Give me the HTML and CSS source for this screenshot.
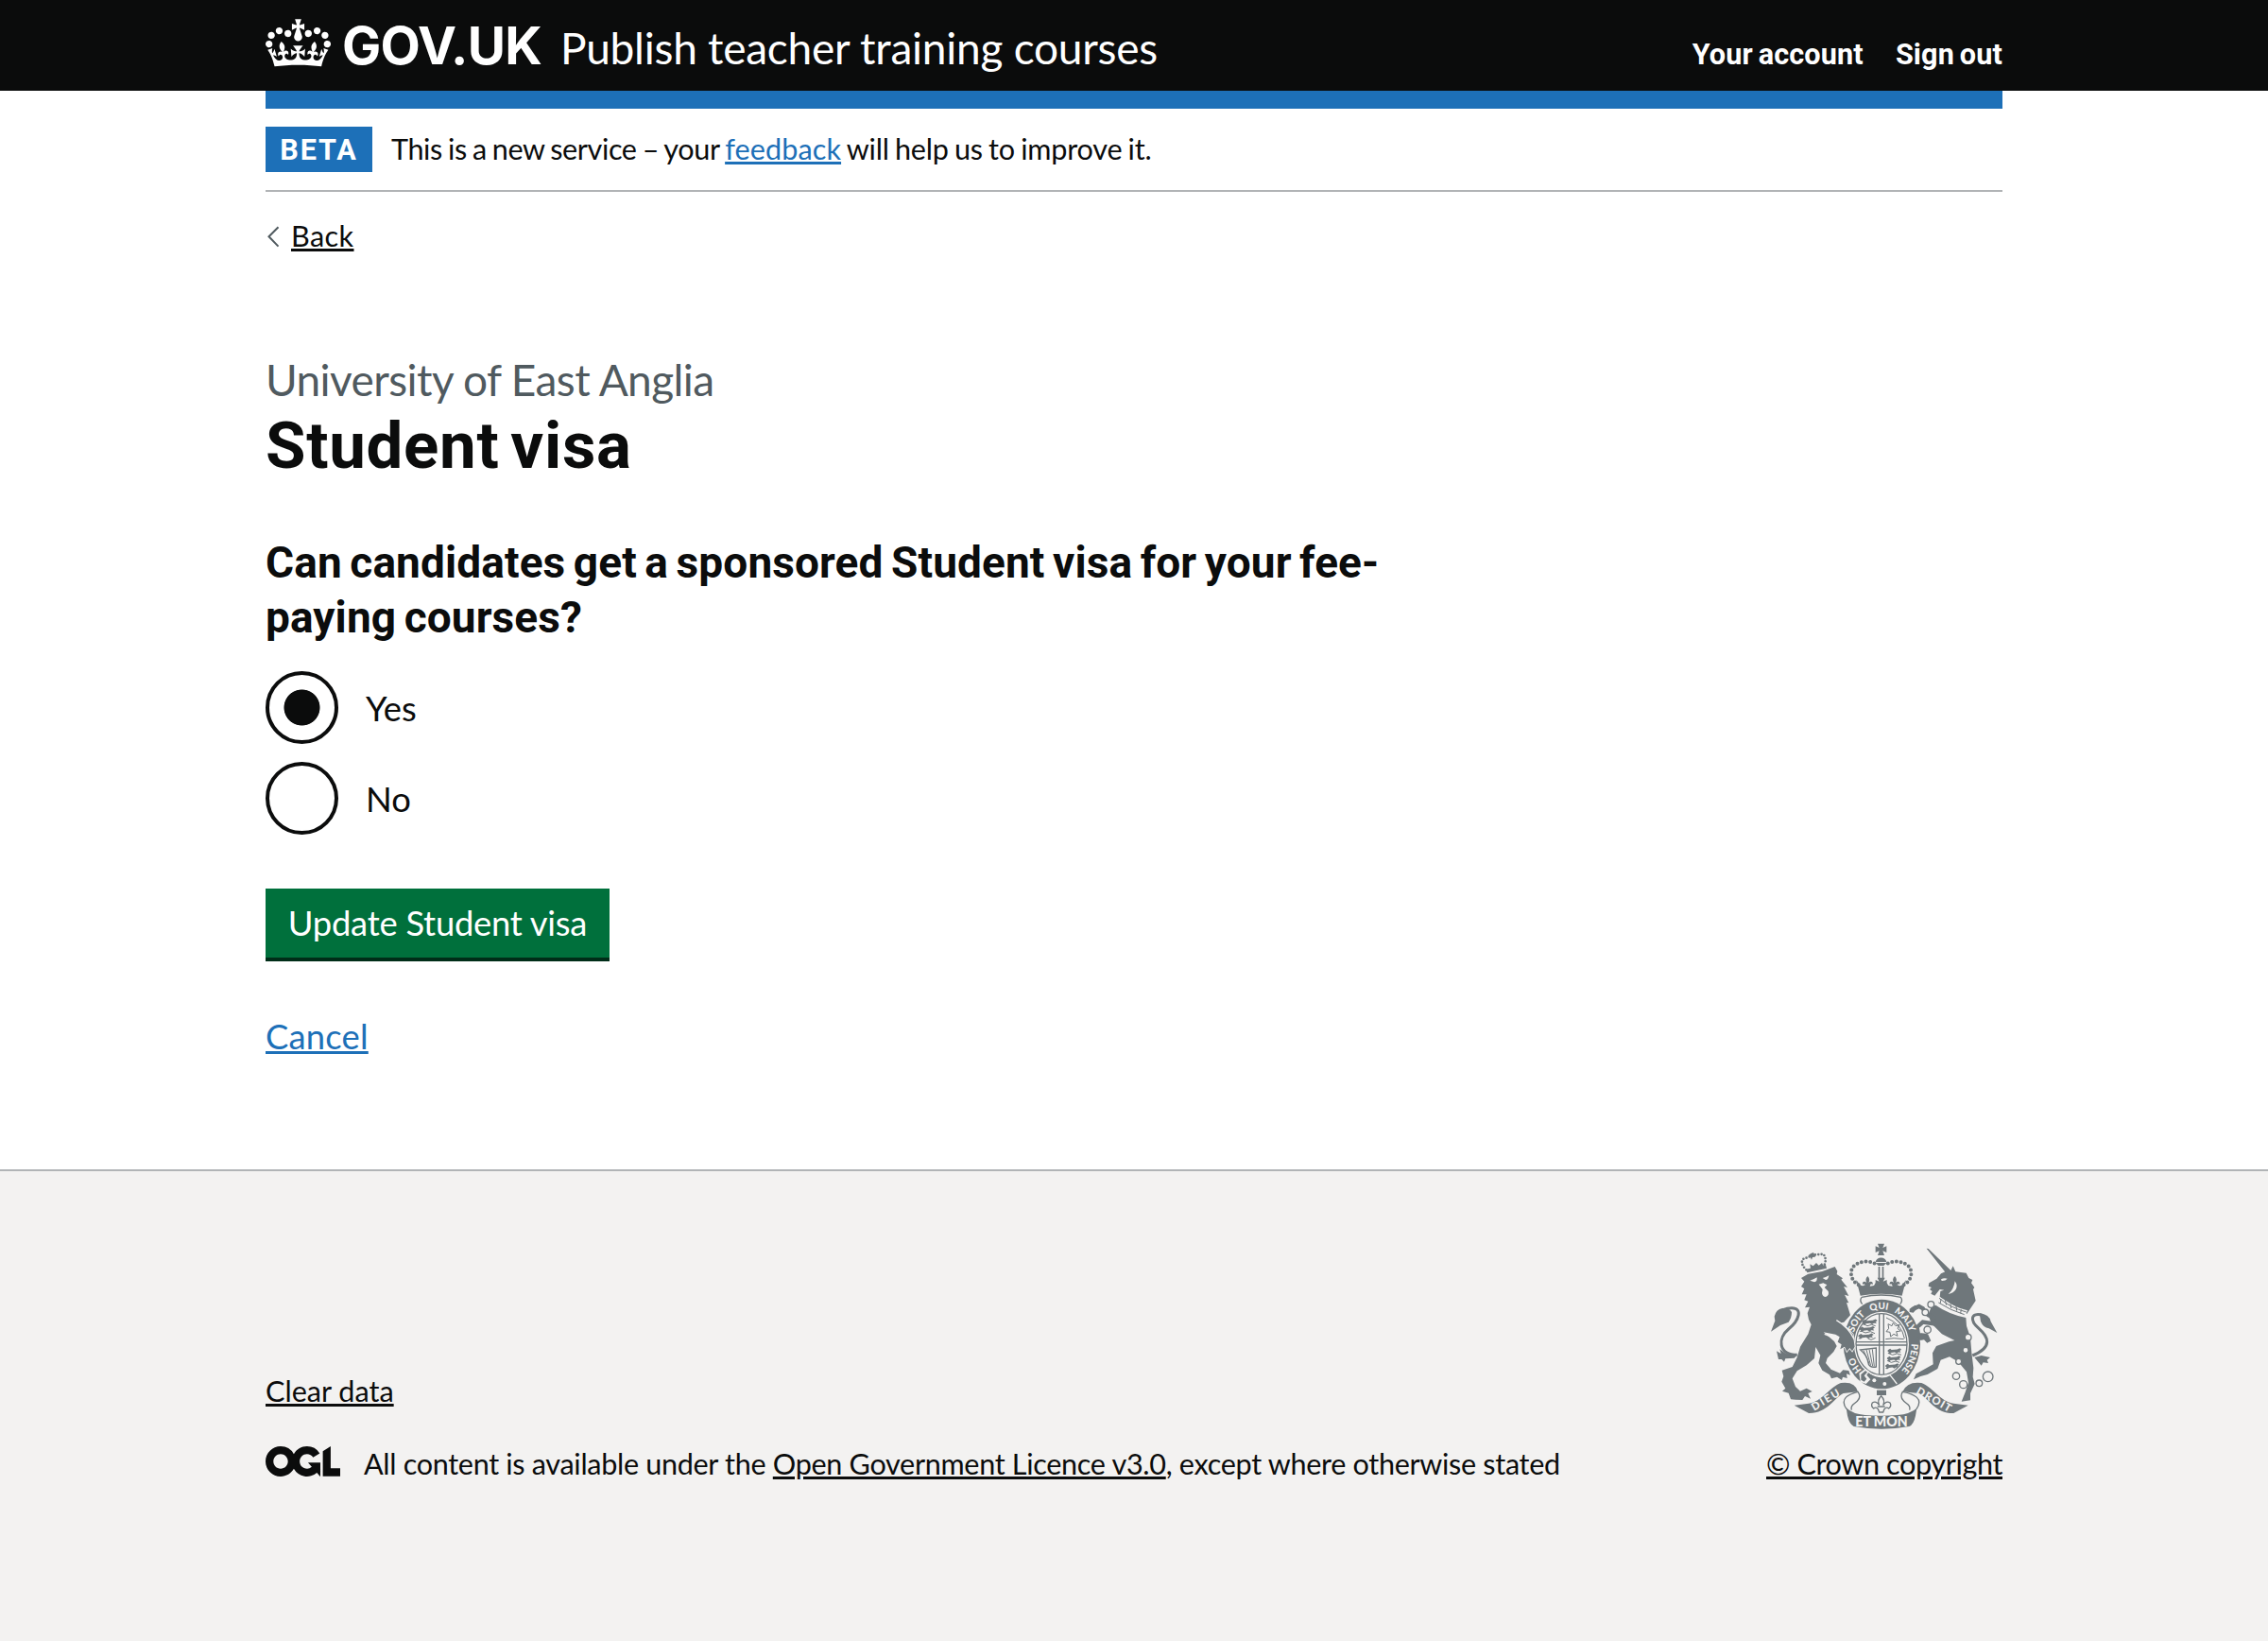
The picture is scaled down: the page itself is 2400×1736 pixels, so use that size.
FILE: index.html
```html
<!DOCTYPE html>
<html lang="en">
<head>
<meta charset="utf-8">
<title>Student visa – Publish teacher training courses – GOV.UK</title>
<link rel="stylesheet" href="styles.css">
</head>
<body>
<header class="header">
  <div class="container header-row">
    <a class="logo" href="#">
      <svg class="crown" viewBox="0 0 132 97" aria-hidden="true"><path fill="currentColor" fill-rule="evenodd" d="M25 30.2c3.5 1.5 7.7-.2 9.1-3.7 1.5-3.6-.2-7.8-3.9-9.2-3.6-1.4-7.6.3-9.1 3.9-1.4 3.5.3 7.5 3.9 9zM9 39.5c3.6 1.5 7.8-.2 9.2-3.7 1.5-3.6-.2-7.8-3.9-9.1-3.6-1.5-7.6.2-9.1 3.8-1.4 3.5.3 7.5 3.8 9zM4.4 57.2c3.5 1.5 7.7-.2 9.1-3.8 1.5-3.6-.2-7.7-3.9-9.1-3.5-1.5-7.6.3-9.1 3.8-1.4 3.5.3 7.6 3.9 9.1zm38.3-21.4c3.5 1.5 7.7-.2 9.1-3.8 1.5-3.6-.2-7.7-3.9-9.1-3.6-1.5-7.6.3-9.1 3.8-1.3 3.6.4 7.7 3.9 9.1zm64.4-5.6c-3.6 1.5-7.8-.2-9.1-3.7-1.5-3.6.2-7.8 3.8-9.2 3.6-1.4 7.7.3 9.2 3.9 1.3 3.5-.4 7.5-3.9 9zm15.9 9.3c-3.6 1.5-7.7-.2-9.1-3.7-1.5-3.6.2-7.8 3.7-9.1 3.6-1.5 7.7.2 9.2 3.8 1.5 3.5-.3 7.5-3.8 9zm4.7 17.7c-3.6 1.5-7.8-.2-9.2-3.8-1.5-3.6.2-7.7 3.9-9.1 3.6-1.5 7.7.3 9.2 3.8 1.3 3.5-.4 7.6-3.9 9.1zM89.3 35.8c-3.6 1.5-7.8-.2-9.2-3.8-1.4-3.6.2-7.7 3.9-9.1 3.6-1.5 7.7.3 9.2 3.8 1.4 3.6-.3 7.7-3.9 9.1zM69.7 17.7l8.9 4.7V9.3l-8.9 2.8c-.2-.3-.5-.6-.9-.9L72.4 0H59.6l3.5 11.2c-.3.3-.6.5-.9.9l-8.8-2.8v13.1l8.8-4.7c.3.3.6.7.9.9l-5 15.4v.1c-.2.8-.4 1.6-.4 2.4 0 4.1 3.1 7.5 7 8.1h.2c.3 0 .7.1 1 .1.4 0 .7 0 1-.1h.2c4-.6 7.1-4.1 7.1-8.1 0-.8-.1-1.7-.4-2.4V34l-5.1-15.4c.4-.2.7-.6 1-.9zM66 92.8c16.9 0 32.8 1.1 47.1 3.2 4-16.9 8.9-26.7 14-33.5l-9.6-3.4c1 4.9 1.1 7.2 0 10.2-1.5-1.4-3-4.3-4.2-8.7L108.6 76c2.8-2 5-3.2 7.5-3.3-4.4 9.4-10 11.9-13.6 11.2-4.3-.8-6.3-4.6-5.6-7.9 1-4.7 5.7-5.9 8-.5 4.3-8.7-3-11.4-7.6-8.8 7.1-7.2 7.9-13.5 2.1-21.1-8 6.1-8.1 12.3-4.5 20.8-4.7-5.4-12.1-2.5-9.5 6.2 3.4-5.2 7.9-2 7.2 3.1-.6 4.3-6.4 7.8-13.5 7.2-10.3-.9-10.9-8-11.2-13.8 2.5-.5 7.1 1.8 11 7.3L80.2 60c-4.1 4.4-8 5.3-12.3 5.4 1.4-4.4 8-11.6 8-11.6H55.5s6.4 7.2 7.9 11.6c-4.2-.1-8-1-12.3-5.4l1.4 16.4c3.9-5.5 8.5-7.7 10.9-7.3-.3 5.8-.9 12.8-11.1 13.8-7.2.6-12.9-2.9-13.5-7.2-.7-5 3.8-8.3 7.1-3.1 2.7-8.7-4.6-11.6-9.4-6.2 3.7-8.5 3.6-14.7-4.6-20.8-5.8 7.6-5 13.9 2.2 21.1-4.7-2.6-11.9.1-7.7 8.8 2.3-5.5 7.1-4.2 8.1.5.7 3.3-1.3 7.1-5.7 7.9-3.5.7-9-1.8-13.5-11.2 2.5.1 4.7 1.3 7.5 3.3l-4.7-15.4c-1.2 4.4-2.7 7.2-4.3 8.7-1.1-3-.9-5.3 0-10.2l-9.5 3.4c5 6.9 9.9 16.7 14 33.5 14.8-2.1 30.8-3.2 47.7-3.2z"/></svg>
      <span class="logo-text">GOV.UK</span>
    </a>
    <a class="service" href="#">Publish teacher training courses</a>
    <nav class="nav"><a href="#">Your account</a><a href="#">Sign out</a></nav>
  </div>
</header>
<div class="container">
  <div class="bar"></div>
  <div class="phase">
    <strong class="tag">BETA</strong>
    <span class="phase-text">This is a new service – your <a class="link feedback" href="#">feedback</a><span class="phase-end"> will help us to improve it.</span></span>
  </div>
  <a class="back" href="#"><svg class="chevron" viewBox="0 0 14 23" aria-hidden="true"><path d="M12.5 1.2 2.5 11.3 12.5 21.6" fill="none" stroke="#505a5f" stroke-width="2"/></svg><span class="back-text">Back</span></a>
  <main class="main">
    <span class="caption">University of East Anglia</span>
    <h1 class="title">Student visa</h1>
    <form>
      <fieldset class="fieldset">
        <legend class="question">Can candidates get a sponsored Student visa for your fee-<br>paying courses?</legend>
        <label class="radio"><input class="radio-input" type="radio" name="visa" checked><span>Yes</span></label>
        <label class="radio"><input class="radio-input" type="radio" name="visa"><span>No</span></label>
      </fieldset>
      <button class="button" type="button">Update Student visa</button>
    </form>
    <p class="cancel"><a class="link" href="#">Cancel</a></p>
  </main>
</div>
<footer class="footer">
  <div class="container footer-row">
    <div class="meta">
      <a class="clear" href="#">Clear data</a>
      <div class="licence">
        <svg class="ogl" viewBox="0 0 483.2 195.7" aria-hidden="true"><path fill="currentColor" d="M421.5 142.8V.1l-50.7 32.3v161.1h112.4v-50.7zm-122.3-9.6A47.12 47.12 0 0 1 221 97.8c0-26 21.1-47.1 47.1-47.1 16.7 0 31.4 8.7 39.7 21.8l42.7-27.2A97.63 97.63 0 0 0 268.1 0c-36.5 0-68.3 20.1-85.1 49.7A98 98 0 0 0 97.8 0C43.9 0 0 43.9 0 97.8s43.9 97.8 97.8 97.8c36.5 0 68.3-20.1 85.1-49.7a97.76 97.76 0 0 0 149.6 25.4l19.4 22.2h3v-87.8h-80l24.3 27.5zM97.8 145c-26 0-47.1-21.1-47.1-47.1s21.1-47.1 47.1-47.1 47.1 21.1 47.1 47.1S123.8 145 97.8 145"/></svg>
        <span class="licence-text">All content is available under the <a href="#">Open Government Licence v3.0</a>, except where otherwise stated</span>
      </div>
    </div>
    <a class="copyright" href="#">
      <svg class="arms" viewBox="57 70 750 597" aria-hidden="true">
        <defs>
          <path id="garter" d="M424 505A94 111 0 0 1 424 283A94 111 0 0 1 424 505"/>
          <g id="beast"><path d="M0 6l8-6 5 5 20-2 9-5 6 6-6 5 4 6-9-1-6 5-7-5-12 2-5 5-8-1 5-6-5-3z"/></g>
          <path id="fleur" d="M0 -20c7 7 7 14 3 21 7-7 15-3 13 6-4-4-8-2-8 4l-4 6h-8l-4-6c0-6-4-8-8-4-2-9 6-13 13-6-4-7-4-14 3-21z"/>
        </defs>
        <g class="ink">
          <!-- imperial crown -->
          <path d="M411 75h21l-5 13 12-5v20l-12-5 5 14h-21l5-14-12 5V83l12 5z"/>
          <path d="M404 133a18 18 0 0 1 35 0zM404 136h35l-9 9h-17z"/>
          <path class="dots" d="M350 206C322 190 319 155 342 141S390 130 405 140"/>
          <path class="dots" d="M494 206C522 190 525 155 502 141S454 130 439 140"/>
          <path d="M413 148h5v38h-5zM425 148h5v38h-5z"/>
          <use href="#fleur" x="379" y="198"/><use href="#fleur" x="465" y="198"/>
          <path d="M410 183h24l-6 12 12-5v22h-36v-22l12 5z"/>
          <path d="M343 190l12 16q10 6 14 0l10 6 20-4 5-8 18 8 18-8 5 8 20 4 10-6q4 6 14 0l12-16-13 50q-66-12-132 0z"/>
          <path class="line" d="M360 245q62-14 124 0 8 10-2 22M360 245q-8 10 2 22"/>
          <!-- garter and shield -->
          <ellipse cx="424" cy="394" rx="122" ry="142"/>
          <ellipse class="paper" cx="423" cy="394" rx="87" ry="103"/>
          <ellipse class="line" cx="423" cy="394" rx="81" ry="97"/>
          <path class="line" d="M416 298v192M430 298v192M342 387h162M342 397h162"/>
          <g transform="translate(354 316) scale(1 .8)"><use href="#beast" x="8"/><use href="#beast" x="0" y="28"/><use href="#beast" x="-4" y="56"/></g>
          <path class="thin" d="M366 330l12 6 14-4 12 4M358 352l14 6 16-4 14 6M380 376l10 4 14-6"/>
          <path class="thin" d="M444 330l12 6 4-10 8 10 12-4-6 12 10 8-14 2 4 14-12-6-10 8-2-14-12-2 8-10z"/>
          <path class="thin" d="M438 310q50 20 58 66M436 378q24-6 58 0"/>
          <g transform="translate(436 408) scale(.9 .8)"><use href="#beast" x="8"/><use href="#beast" x="6" y="30"/><use href="#beast" x="0" y="60"/></g>
          <path class="thin" d="M444 422l14 6 14-4 14 4M442 446l12 6 14-4 12 4"/>
          <path class="line" d="M356 412l50-6v60q-24 4-26-16t-24-38z"/>
          <path class="thin" d="M366 414l18 42M375 412l14 50M384 411l11 52M394 410l6 54"/>
          <path class="paper" d="M352 486l20-14 12 8-8 12 12 14-14 14-18-6z"/>
          <path d="M358 490l14-12 6 5-10 11 8 10-8 9-10-6z"/>
          <circle class="paper" cx="400" cy="509" r="6"/><circle class="paper" cx="433" cy="520" r="6"/>
          <path class="paperline" d="M384 484q36 24 66 8l22 28"/>
          <!-- lion -->
          <path class="dots small" d="M184 158q-20-20-10-34l26-10 12-4 26-2q12 14 4 34"/>
          <path d="M199 106l8-3 3 6 5 1-3 7-8 1-3 8-5-10-5-4zM183 156l63-14 3 11-62 14zM196 140l10 6 10-10 8 8 10-8 4 8-40 10z"/>
          <path class="halo" d="M168 184l22-13 45-8 40-15 8 14-2 10 19 13-5 4 20 25-12-3 16 30-13-4 13 26-7-1 12 40-20 22-8 2 14 14 22 22 6 40-8 14-8-10-9 11-7-15-14 8 4-15-12-8 6-16-13-8-38-7 34 29 8 15-10 18-20 20-5 16 17 20 28 12 10-10 18 2 5 14-12-4 2 14-14-4-3 10-15-10-18 5-6-12-23-14-12-23 6-25-15-26-4 36-25 22-30 18-15 24 10 26 15 14 20-9 18 10-13 6 8 17-18-8-8 12-22-1-15-1-7-20-20-6 10-9-12-21 6-17-5-19 33-11 15-30 10-34 25-40 10-30-8-16-4-20 7-20-15 2 10-20-12-4 7-18-15 0 8-18-10-7 10-16z"/>
          <path class="tail" d="M155 428C93 426 94 374 128 346S174 279 138 279q-16 0-26 6"/>
          <path d="M138 292q-10-16-30-12t-25 26l2 14-13 34 30-20 26-10q10-14 10-32zM90 416l14 8-4-14 20 14 36 4-10 10-28 2-4 10-8-8-10 0z"/>
          <path class="paper" d="M196 192q10-2 22-10 2 14-8 15zM236 184q10-2 20-8-2 14-10 14zM224 204l14-4 12 6-8 8 12 12q4 14-8 18-10 0-12-12l2-12z"/>
          <path class="paperline" d="M280 318q38 22 56 60M242 362q36 10 44 40"/>
          <!-- unicorn -->
          <path d="M566 90l6 1 72 70-14 10zM650 146l8 18 34 4 8 16 12 6-4 10 10 14-4 6 8 36-8 12-20 30-86-54 2-18 12-4-14-2-16 20-12-6 4-8-8-6 6-6-10-4 2-10 24-14 14-16 22-10 8 2z"/>
          <path class="paper" d="M656 194q10 14 3 26t-24 15q18-14 21-41zM612 188q10-6 20-2-6 8-18 7z"/>
          <path class="paper" d="M604 241q38 32 92 46l-8 19q-48-12-92-42z"/>
          <path class="thin" d="M606 248q36 30 86 44M604 262q36 24 82 38M612 250l-2 14M625 254l4 16M642 266l2 14M660 274l2 14M676 284l-2 12"/>
          <path d="M595 270q40 28 96 40l2 26 12 36 4 48 6 50-2 28 6 22-14 30 0 22-28 4 12-30 10-30-6-34-26-32-28-16-28 10-10 28-32 18-22 6-22 10 8-18 14-8 40-22-2-36 12-22 40-14 18-4-40-20-34-34-10-28 10-24z"/>
          <path class="limb" d="M596 310q-28-2-42-30l-12-6-22 10M594 330l-40-6-18 16 4 24 26 4 8 18"/>
          <path d="M512 282l18-12 6 10-12 14-12-2zM540 362l20-2 18 24-10 6-10-10-14 2z"/>
          <path class="tail" d="M712 430C778 404 762 370 732 344S706 292 744 302"/>
          <path d="M734 296q32 4 36 26l20 36-26-14q-18-2-26-22zM718 436l22-6 28 6-10 8 4 10-16-2-6 10-12-14z"/>
        </g>
        <g class="chain">
          <circle cx="580" cy="268" r="10"/><circle cx="562" cy="293" r="10"/><circle cx="569" cy="348" r="11"/>
          <circle cx="698" cy="372" r="10"/><circle cx="690" cy="413" r="9"/><circle cx="668" cy="449" r="9"/><circle cx="660" cy="495" r="11"/><circle cx="683" cy="522" r="12"/><circle cx="733" cy="518" r="10"/><circle cx="761" cy="497" r="16"/>
        </g>
        <!-- motto scroll -->
        <g class="ink">
          <path d="M146 588l46-6c40-4 64-50 102-65q46-6 54 28l-46 5c-30 14-50 64-110 63z"/>
          <path d="M698 588l-46-6c-40-4-64-50-102-65q-46-6-60 28l52 5c30 14 50 64 110 63z"/>
          <path class="line" d="M312 600c-24-34 8-48 36-55q12 16-2 30c-10 10-22 12-18 28M534 600c24-34-8-48-44-55q-10 16 4 30c10 10 22 12 18 28"/>
          <path d="M311 596q20 20 60 23 50 5 102 0 42-4 62-22l-4 24q-6 28-20 34-88 16-176 0-14-8-20-34z"/>
          <path d="M408 540h30v16h-30z"/>
          <path class="line" d="M422 558q14 14 6 30 10-16 22-8 6 10-4 18-8-6-14 2l-4 10h-12l-4-10q-6-8-14-2-10-8-4-18 12-8 22 8-8-16 6-30zM410 592h24"/>
        </g>
        <g class="motto">
          <text font-size="30"><textPath href="#garter" startOffset="72">HO</textPath></text>
          <text font-size="30"><textPath href="#garter" startOffset="198">SOIT</textPath></text>
          <text font-size="30"><textPath href="#garter" startOffset="286">QUI</textPath></text>
          <text font-size="30"><textPath href="#garter" startOffset="362">MALY</textPath></text>
          <text font-size="30"><textPath href="#garter" startOffset="482">PENSE</textPath></text>
          <text font-size="34" transform="translate(209 606) rotate(-31)" textLength="98">DIEU</text>
          <text font-size="34" transform="translate(531 549) rotate(30)" textLength="122">DROIT</text>
          <text font-size="44" x="340" y="655" textLength="166" lengthAdjust="spacingAndGlyphs">ET MON</text>
        </g>
      </svg>
      <span class="copyright-text">© Crown copyright</span>
    </a>
  </div>
</footer>
</body>
</html>
```
FILE: styles.css
```css
* { box-sizing: border-box; }
body {
  margin: 0;
  background: #fff;
  color: #0b0c0c;
  font-family: Lato, "Noto Sans", sans-serif;
  font-size: 30.6px;
  line-height: 38px;
}
a { color: inherit; text-decoration-thickness: 3px; text-underline-offset: 2px; }
.container { width: 1838px; margin: 0 auto; }

.header { height: 96px; background: #0b0c0c; color: #fff; }
.header a { text-decoration: none; }
.header-row { display: flex; align-items: flex-start; height: 96px; }
.logo { display: flex; align-items: flex-start; }
.crown { display: block; width: 69px; height: 51px; margin-top: 20px; }
.logo-text { margin: 18px 0 0 12px; width: 231px; font: 700 55px/60px Inter, sans-serif; letter-spacing: -0.7px; }
.service { margin-top: 21px; font-size: 46px; line-height: 60px; letter-spacing: -0.25px; white-space: nowrap; }
.nav { display: flex; gap: 34px; margin: 39px 0 0 auto; font: 700 30.6px/38px Roboto, sans-serif; letter-spacing: 0.15px; word-spacing: -2px; }

.bar { height: 19px; background: #1d70b8; }
.phase { display: flex; align-items: center; gap: 20px; height: 88px; border-bottom: 2px solid #b1b4b6; }
.tag { width: 113px; height: 48px; background: #1d70b8; color: #fff; font: 700 30.6px/50px Roboto, sans-serif; letter-spacing: 1.9px; text-align: center; }
.phase-text { letter-spacing: -0.38px; word-spacing: -1.4px; }
.feedback { letter-spacing: 0.1px; }
.phase-end { letter-spacing: -0.2px; }
.link { color: #1d70b8; }
.back { display: flex; align-items: flex-start; margin-top: 28px; height: 38px; text-decoration: none; }
.chevron { display: block; width: 14px; height: 23px; margin: 8px 12px 0 1px; }
.back-text { text-decoration: underline 3px; text-underline-offset: 2px; letter-spacing: 0.4px; }

.main { padding-top: 104px; }
.caption { display: block; font-size: 46px; line-height: 58px; letter-spacing: -0.6px; color: #505a5f; }
.title { margin: 3px 0 57px; font: 700 69px/76px Roboto, sans-serif; letter-spacing: 0.7px; word-spacing: -6px; }
.fieldset { margin: 0; padding: 0; border: 0; }
.question { padding: 0; margin-bottom: 28px; font: 700 46px/57.5px Roboto, sans-serif; letter-spacing: 0.1px; word-spacing: -3px; white-space: nowrap; }
.radio { display: flex; align-items: center; gap: 29px; height: 77px; margin-bottom: 19px; font-size: 36.4px; line-height: 48px; }
.radio-input { appearance: none; width: 77px; height: 77px; margin: 0; border: 4px solid #0b0c0c; border-radius: 50%; }
.radio-input:checked { background: radial-gradient(circle, #0b0c0c 18.6px, transparent 19.4px); }
.button { display: block; width: 364px; height: 73px; margin-top: 38px; padding: 0; border: 0; background: #00703c; box-shadow: 0 4px 0 #002d18; color: #fff; font: 36.4px/73px Lato, sans-serif; letter-spacing: -0.25px; }
.cancel { margin: 59px 0 0; font-size: 36.4px; line-height: 48px; letter-spacing: 0.2px; }

.footer { height: 499px; margin-top: 117px; padding-top: 76px; border-top: 2px solid #b1b4b6; background: #f3f2f1; }
.footer-row { display: flex; justify-content: space-between; align-items: flex-end; height: 253px; }
.meta { display: flex; flex-direction: column; align-items: flex-start; gap: 39px; }
.licence { display: flex; align-items: flex-start; gap: 25px; }
.ogl { display: block; width: 79px; height: 32px; }
.licence-text { letter-spacing: -0.32px; white-space: nowrap; }
.copyright { display: flex; flex-direction: column; width: 250px; text-decoration: none; }
.copyright-text { text-decoration: underline 3px; text-underline-offset: 2px; letter-spacing: -0.39px; white-space: nowrap; }
.arms { display: block; width: 250px; height: 199px; margin-bottom: 17px; }

.ink { fill: #6f777b; }
.paper { fill: #f3f2f1; }
.line { fill: none; stroke: #6f777b; stroke-width: 4; }
.thin { fill: none; stroke: #6f777b; stroke-width: 3; }
.paperline { fill: none; stroke: #f3f2f1; stroke-width: 4; }
.halo { stroke: #f3f2f1; stroke-width: 5; paint-order: stroke; }
.tail { fill: none; stroke: #6f777b; stroke-width: 9; }
.limb { fill: none; stroke: #6f777b; stroke-width: 13; }
.dots { fill: none; stroke: #6f777b; stroke-width: 12; stroke-linecap: round; stroke-dasharray: 0 14; }
.small { stroke-width: 8; stroke-dasharray: 0 10; }
.chain { fill: #f3f2f1; stroke: #6f777b; stroke-width: 4; }
.motto { fill: #f3f2f1; font-family: Lato, sans-serif; font-weight: 900; }
```
